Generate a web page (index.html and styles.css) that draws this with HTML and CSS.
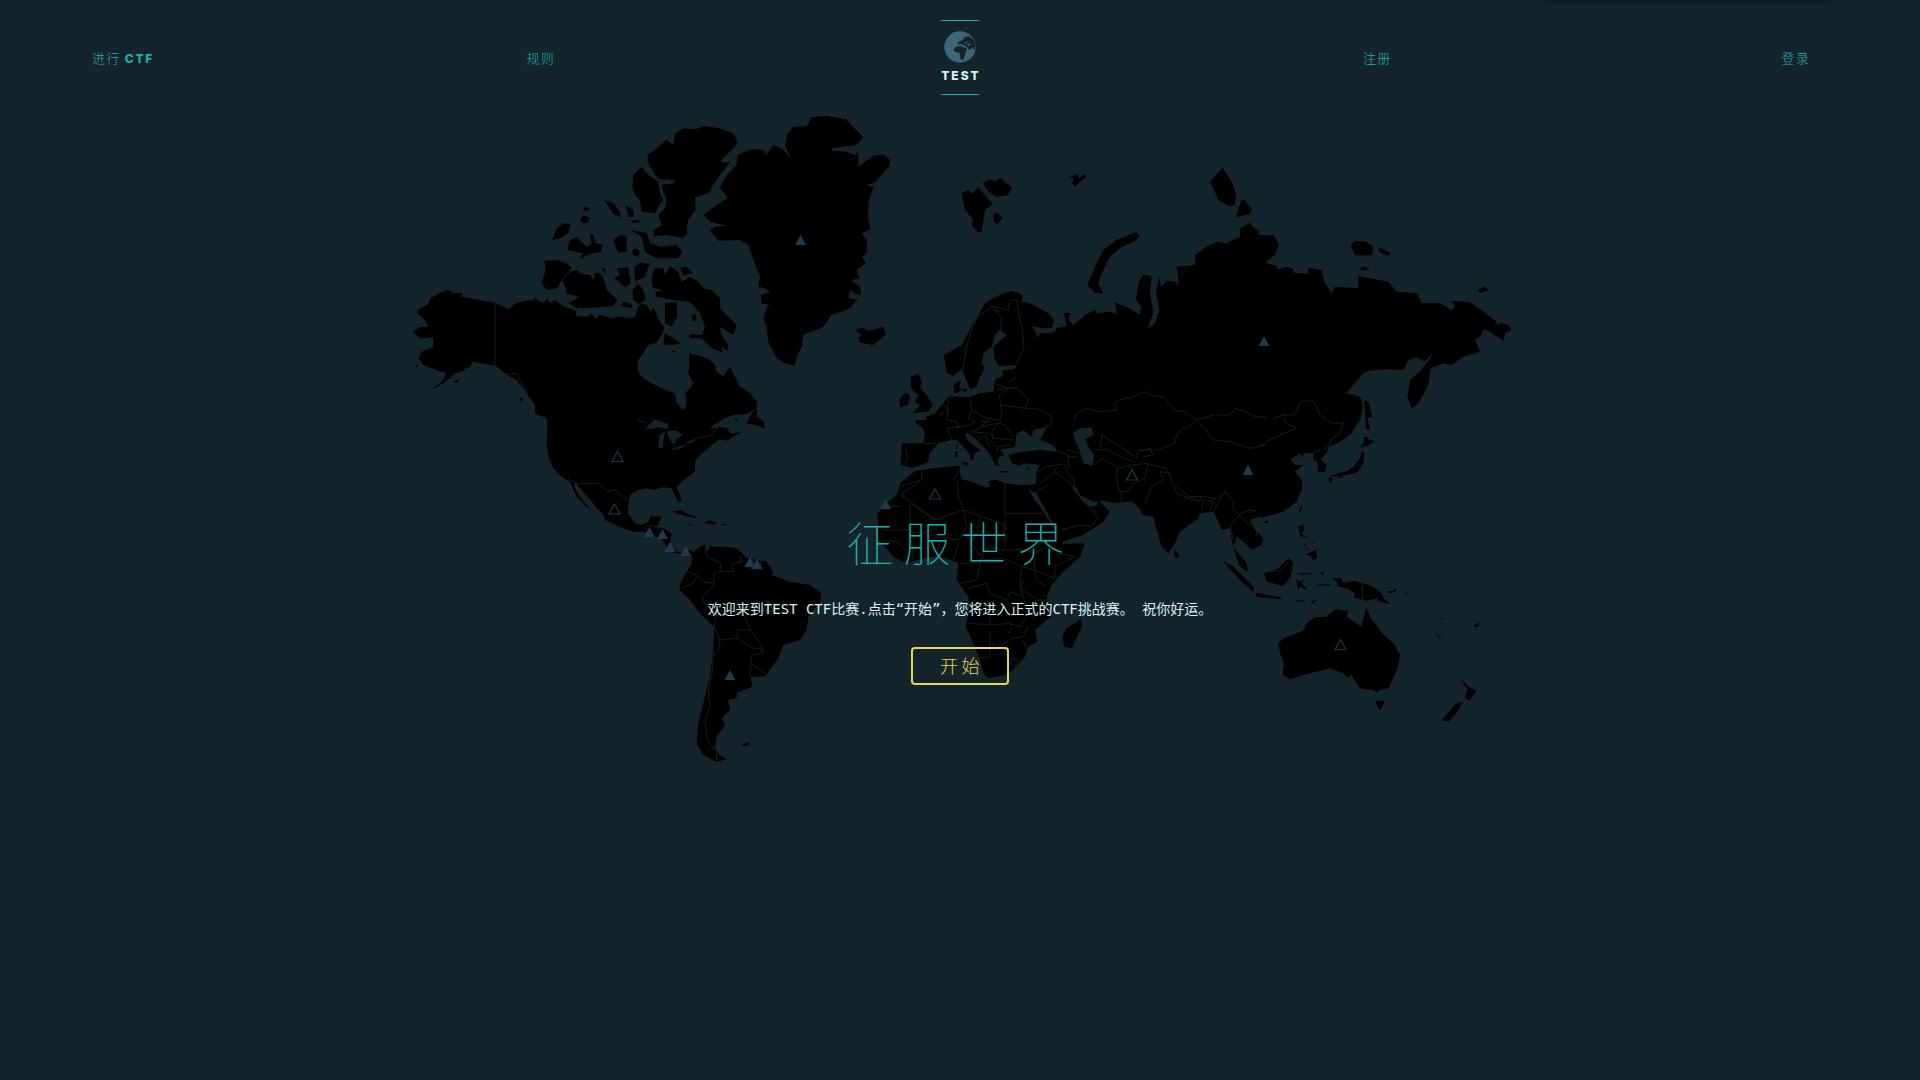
FILE: index.html
```html
<!DOCTYPE html>
<html lang="zh-CN">
<head>
<meta charset="utf-8">
<title>TEST CTF</title>
<link rel="stylesheet" href="styles.css">
</head>
<body>
<div class="page">
<svg class="map" viewBox="0 0 1920 1080" aria-hidden="true">
  <!-- Alaska, Canada and the Arctic islands -->
  <g transform="translate(400 100) scale(.33333)">
    <path class="land" d="M52 630L85 612 90 596 120 578 145 569 160 580 185 578 185 590 240 600 285 608 325 628 345 612 375 602 400 600 408 592 415 602 432 608 440 596 450 608 465 600 490 618 530 632 528 648 560 650 575 642 585 658 600 645 635 655 660 650 690 655 705 650 715 620 725 610 740 615 752 635 760 622 770 645 780 665 792 680 788 700 770 728 745 735 730 760 715 780 712 810 725 830 755 850 790 868 825 880 830 905 845 928 857 925 860 900 855 880 870 865 880 850 865 820 868 790 868 760 900 768 920 775 943 790 950 815 970 828 990 802 1005 830 1020 860 1050 880 1070 905 1070 925 1040 942 1000 945 970 955 940 975 900 1020 442 1020 440 985 455 975 440 955 405 940 405 915 380 880 350 840 320 825 285 797 245 790 215 785 190 812 165 820 130 850 70 883 100 865 130 840 140 818 120 815 95 805 70 795 55 775 65 755 100 740 100 712 60 715 38 697 60 682 85 680 75 660 52 640Z"/>
    <path class="land" d="M742 165L765 150 800 118 820 135 825 100 850 85 885 88 915 78 960 85 1000 100 1013 125 1000 145 965 180 962 186 990 187 960 225 935 262 925 280 885 292 887 330 865 360 860 385 862 400 850 415 800 405 762 408 762 390 785 375 775 345 795 325 800 295 790 280 785 255 820 250 826 240 780 238 765 225 745 190ZM697 260L700 225 725 200 745 225 775 245 780 280 790 300 775 320 768 340 725 335 720 300 705 285ZM613 300L640 310 660 335 662 352 640 342ZM677 317L700 330 700 352 685 350ZM548 328L558 320 570 326 558 335ZM540 358L550 347 568 352 565 366 545 370ZM457 420L470 385 490 370 512 372 505 398 480 415ZM503 450L510 420 530 412 560 440 575 432 570 402 580 405 588 430 607 432 605 455 570 462 540 477 548 460ZM640 420L665 403 680 412 680 455 655 458ZM693 390L740 400 750 430 780 440 830 435 847 455 835 475 770 475 735 455 725 410ZM697 450L708 443 720 455 715 470 698 465ZM695 360H718V368H698ZM433 482L470 480 500 490 515 503 485 540 470 565 440 570 425 548 437 510ZM487 540L510 515 530 510 545 522 570 525 580 540 585 518 600 520 612 540 620 570 652 600 640 618 600 622 530 625 505 608 540 590 497 580 500 570ZM602 505L615 505 616 520ZM643 535L660 525 650 505 685 502 692 550 675 562ZM703 500L720 488 748 492 735 530 705 545ZM697 570L715 552 730 570 737 600 715 612 700 600ZM755 530L765 505 790 505 795 525 810 498 835 515 845 545 870 530 895 545 910 565 935 570 960 595 960 625 980 645 1010 675 1000 705 958 680 965 705 985 735 982 752 962 740 972 760 935 745 905 715 865 715 870 703 905 705 915 680 900 640 870 605 820 600 770 590 765 575 790 573 757 560ZM840 503L860 500 880 520 850 525ZM795 610L830 605 832 650 815 680 795 670ZM875 645L888 642 890 660 876 664ZM795 700L820 715 845 732 790 735ZM672 605L695 612 697 625 662 618ZM1040 970L1055 940 1068 925 1068 950 1090 965 1095 985 1070 975ZM160 845L178 835 172 848ZM188 800L205 783 217 790 205 805ZM357 890L370 897 362 905ZM43 795L55 796 50 801ZM812 756L825 750 822 758ZM845 763L853 766 848 769Z"/>
    <path class="border" d="M285 608V797L320 825 350 820 382 880M455 958H712L760 970"/>
  </g>
  <!-- United States, Central and South America -->
  <g transform="translate(520 400) scale(.33333)">
    <path class="land" d="M82 90V40H640L580 75 570 88 600 80 622 85 630 100 665 97 620 122 600 118 575 135 560 150 535 170 525 185 525 215 490 240 470 262 485 300 475 308 462 280 455 265 430 262 400 270 380 265 350 272 330 285 325 310 325 340 345 370 365 375 385 365 392 348 425 350 415 375 400 380 430 385 455 400 450 430 470 455 500 460 512 448 520 462 505 470 490 462 460 458 440 440 425 415 395 408 370 395 340 395 300 382 255 360 250 345 210 300 185 270 165 248 162 260 180 290 212 328 200 320 170 290 150 245 125 230 100 205 85 170 80 130ZM515 460L540 440 565 430 575 440 610 440 650 445 680 475 740 485 760 515 755 525 810 545 870 555 903 580 900 605 865 650 860 690 840 720 790 735 775 775 735 830 690 830 698 860 650 878 650 895 625 900 630 930 605 955 615 975 590 1010 585 1045 600 1065 620 1078 590 1085 550 1065 530 1030 535 970 550 910 570 830 580 750 582 680 540 640 505 595 478 570 482 545 500 515 515 490ZM455 335L480 330 535 355 510 352ZM552 368L570 360 595 372 575 374ZM505 372L518 373 512 377ZM605 372H618V376H605ZM665 1033L690 1026 686 1036 672 1038ZM503 315L508 318 504 322Z"/>
    <path class="sea" d="M375 85L405 60 445 72 442 88 415 80 395 88ZM440 92L470 92 488 106 468 118 462 136 445 110ZM418 105L436 94 430 120 428 145 416 145ZM454 147L495 134 490 143 460 150ZM492 128L525 118 520 127ZM570 88L600 70 640 52 690 38 680 68 665 92 635 97 620 75 600 72ZM556 432L570 428 567 448 558 452Z"/>
    <path class="land" d="M640 58L655 55 650 62ZM680 70L710 25 710 50 730 65 735 85 710 75Z"/>
    <path class="border" d="M145 238L180 252 235 250 262 275 285 270 325 303M350 60L380 68M495 138L530 115 575 105 600 75M370 392L380 378 400 378M555 440L560 470 602 490 600 515 582 520 582 555 548 590 552 610 580 612M600 515L640 515 635 492 665 485 660 465M500 515L530 525 550 545 580 550M485 565L520 550 530 530M580 612L590 640 582 680 600 720 650 715 655 690 690 690 675 650 620 615M650 715L700 745 720 745 730 760 695 765 690 830M600 720L595 750 580 770 575 830 565 870 570 920 555 960 560 1010 575 1040 585 1050M690 690L725 735 730 760M695 790L735 820M690 510L700 480M720 512L725 480M590 1050V1080M560 1055L580 1045"/>
  </g>
  <!-- Greenland, Iceland, Svalbard and the Nordic countries -->
  <g transform="translate(660 100) scale(.33333)">
    <path class="land" d="M130 345L165 318 203 295 180 262 200 225 230 195 232 165 275 147 310 150 318 165 340 135 370 150 397 178 375 140 380 105 400 80 440 78 455 52 500 48 558 58 590 92 610 112 590 135 515 145 515 152 560 155 585 165 595 155 595 200 640 168 670 163 690 180 688 198 645 248 618 255 640 260 625 310 625 360 632 388 605 400 622 425 620 460 605 470 618 490 590 510 598 535 575 540 600 560 603 583 585 582 570 570 565 595 593 598 570 625 515 645 490 680 430 705 425 740 412 765 403 797 375 790 350 775 325 725 320 680 310 655 320 625 335 600 330 612 305 612 302 585 325 578 335 582 315 565 295 560 300 530 280 480 265 435 240 420 175 422 150 390 165 380 200 378 150 365ZM585 690L605 683 625 692 645 688 670 680 677 705 640 735 600 728 595 715 605 705ZM904 280L925 270 935 282 955 262 975 285 998 312 975 330 965 395 955 398 935 375 940 360 915 330ZM968 250L990 238 1005 245 1020 233 1055 262 1045 285 1010 290 985 275ZM1000 350L1003 338 1015 340 1028 355 1012 372 1002 364Z"/>
    <path class="land" d="M852 765L905 735 940 670 975 610 1000 595 1030 580 1055 572 1088 585 1085 605 1105 608 1130 620 1165 640 1182 660 1175 685 1150 685 1115 678 1130 700 1130 725 1145 732 1145 712 1175 718 1190 683 1220 680 1240 900 1060 900 1020 860 1000 855 1010 835 1030 830 1025 812 1070 805 1068 795 1015 798 1003 775 1000 740 1040 705 1020 690 1005 705 995 740 970 760 965 790 975 805 960 830 950 860 930 868 915 830 905 808 880 828 860 820ZM880 855L902 840 898 860 905 868 892 880 882 878ZM905 868L920 865 915 878ZM752 830L775 822 785 845 780 862 800 885 818 915 805 935 758 940 780 915 765 905 775 885 762 875 752 860ZM718 900L735 878 750 885 745 915 720 922Z"/>
    <path class="border" d="M908 810L920 740 935 690 955 645 985 630 995 618 1025 655 1022 690M995 618L1045 630 1050 600 1070 600 1078 650 1088 700 1092 745 1068 795M1005 628L1020 635"/>
  </g>
  <!-- Russia and its Arctic islands -->
  <g transform="translate(1060 140) scale(.33333)">
    <path class="land" d="M-40 590L-20 575 20 562 12 518 32 520 25 535 38 555 60 540 75 525 105 510 110 520 150 515 170 522 165 487 200 500 240 525 243 500 228 480 235 430 250 403 275 410 270 460 280 520 262 565 285 550 298 510 288 460 298 410 303 440 320 422 345 425 357 438 350 380 405 375 405 345 440 320 470 305 500 310 540 290 540 265 570 248 580 262 592 270 600 285 640 285 657 315 645 345 615 368 650 378 655 388 680 380 700 386 702 398 745 402 743 383 785 390 795 430 815 460 825 440 850 442 895 445 895 408 985 425 1010 455 1070 460 1085 490 1140 490 1175 510 1185 500 1175 482 1230 487 1270 515 1310 545 1310 555 1322 548 1345 555 1355 570 1336 580 1330 602 1285 572 1270 568 1262 590 1245 598 1260 635 1210 650 1175 675 1150 670 1112 685 1105 735 1075 790 1055 807 1042 770 1050 720 1085 690 1110 655 1120 635 1095 665 1070 652 1045 660 1030 690 985 688 930 692 910 700 857 762 885 765 905 780 905 820 880 870 840 900 -40 900ZM82 435L105 380 130 330 170 300 225 277 238 285 230 300 180 325 150 350 125 400 115 430 130 462 105 458ZM450 125L488 83 515 125 528 160 525 195 505 198 475 180 462 150ZM545 177L555 182 575 205 570 222 527 232ZM872 315L885 303 915 304 940 320 935 345 885 347ZM955 325L970 328 992 338 985 347 960 338ZM900 385L915 378 927 390 903 391ZM1255 450L1270 440 1287 450 1260 460ZM27 112L50 103 58 115 70 102 78 112 60 125 45 140 35 130 42 115ZM913 780L925 785 937 830 922 835 930 868 918 868Z"/>
  </g>
  <!-- Europe, Africa, Middle East and India -->
  <g transform="translate(880 340) scale(.33333)">
    <path class="land" d="M105 240L140 240 138 230 165 220 190 190 205 170 235 170 270 172 300 160 340 155 345 130 365 110 410 80 480 -20 1205 -20V515L1150 532 1140 530 1110 540 1125 570 1150 595 1145 615 1115 630 1095 610 1070 590 1060 620 1080 645 1100 670 1103 695 1080 680 1065 640 1055 600 1050 565 1025 570 1010 535 1000 515 960 520 955 535 900 575 885 610 865 640 845 620 830 570 820 530 790 525 775 500 755 485 700 488 670 482 640 485 600 465 588 440 575 440 605 480 625 500 650 498 655 480 690 515 670 545 610 585 545 605 530 570 505 525 480 480 465 450 470 395 480 375 430 370 420 378 395 370 385 345 430 335 480 330 530 335 525 318 480 300 500 262 460 270 455 290 430 270 410 280 405 320 385 325 360 330 375 345 358 350 352 365 360 378 345 375 330 345 320 330 290 300 270 285 262 278 255 282 262 300 302 332 285 338 280 358 270 360 272 345 245 315 225 298 215 300 175 310 150 340 145 365 115 378 95 383 62 375 65 310 130 310 135 280 125 262 108 250ZM240 367L265 368 260 378ZM224 335H233V350L226 352ZM227 318L233 312 231 328ZM362 393L385 394 384 398 363 397ZM435 388L450 380 443 390Z"/>
    <path class="sea" d="M578 280L600 265 635 262 640 285 615 298 625 320 642 345 638 378 610 370 600 335 588 305Z"/>
    <path class="land" d="M105 393L160 385 220 378 240 378 238 395 245 418 275 425 318 442 330 440 325 422 350 420 375 430 430 436 470 432 473 455 460 458 445 445 460 475 480 500 500 530 525 570 545 600 550 612 615 610 600 650 550 695 515 735 500 770 505 800 512 830 465 870 472 905 445 920 435 950 400 990 375 1005 325 1015 310 1000 300 960 275 900 257 860 270 800 265 770 230 720 235 670 200 655 150 650 80 668 45 655 10 615 -10 600 -5 560 -8 520 20 490 50 465 60 430 90 405ZM603 835L605 860 575 925 552 920 548 890 558 865 585 850ZM883 628L898 645 893 655 884 652ZM1028 662L1060 680 1120 740 1120 757 1085 725Z"/>
    <path class="border" d="M580 245L590 220 620 205 660 215 710 210 705 190 715 180 755 172 795 155 820 168 850 170 890 215 910 212 950 240 925 265 910 262 890 285 885 310 830 330 775 330 770 355 720 320 665 285 662 325M950 240L1000 225 1050 225 1065 205 1095 215 1120 228 1180 235 1215 230M955 245L985 280 1000 300 1050 305 1110 325 1180 310 1200 290M640 330L680 328 730 355 765 365M645 375L665 355 710 380 712 430 725 465 722 485M712 385L760 375 800 370 860 385 870 405 880 435 930 470 975 470 1010 478 1035 455 1045 460M805 370L795 415 760 430 740 455 712 455M795 490L815 440 850 420 840 395 870 400M885 445L890 462 960 485 962 470M970 475L965 510M975 480L1000 485 990 515M1000 515L1020 475 1035 455 1060 485 1060 510 1080 525 1050 555 1060 600M1080 525L1100 550 1130 555 1130 590M1080 520L1110 510 1130 515M475 395L500 380 550 372 565 385 565 345 530 330M480 430L525 395 530 380M525 395L590 445M555 385L580 420 585 440M475 450L505 435M545 570L600 555 635 560 655 530 630 500M560 330L600 340M565 350L590 350M780 335L810 325 820 345 790 350M125 395V420L65 462 70 475M120 420L60 440M65 465L165 540 250 510 235 470 232 425M235 395L220 420M250 510L295 525 375 555M375 430V520H485M375 520V620L365 630M165 540L90 490 90 570H10M90 575L130 580 175 560M250 510L260 560 235 600 165 590M300 525L290 580 270 610M375 555L370 590M30 500H60M10 600L50 605 80 630M95 600L100 660M140 600L145 650M180 600L170 650M235 610L220 660M275 610L300 645 330 620 365 630 430 630 465 640 500 615 520 570M240 670H300L310 645M300 670L290 720 240 730M300 660L370 655 425 680 420 740 430 770 390 755 380 780 330 760 320 730 265 745M425 680L465 690 525 715V680L585 650 540 640M465 690L470 720 500 740M430 725L420 745 475 780 510 780M465 690L460 640M265 850L340 855 385 850 420 860 440 830M330 870V950L290 955M330 905L350 925 395 895 430 890 445 860M395 860L385 880M330 800V850M430 770L440 810 465 835M430 900L440 930M390 970L400 955 415 962 405 980ZM75 320L82 350 75 375M130 310L170 312M200 265L215 300M200 265L235 262 230 245 200 240 205 205 180 225M190 190L200 205 210 170M270 172L275 210 265 235 285 245 270 255 225 262M275 210L300 225 320 235 360 240 365 215 358 165M360 195L400 200 435 205 445 180 415 145 385 145 360 165M340 130L385 145M350 150L410 140M410 110L390 125M435 205L470 205 515 230 510 255 495 262M320 240L305 260 275 275M305 260L355 250 375 255 400 290M355 250L335 275 340 300M275 275L325 280 345 295 400 300M315 285L330 320M330 300L350 320 395 315M355 320L350 335M300 245L330 245M290 290L305 300"/>
  </g>
  <!-- East Asia and Oceania -->
  <g transform="translate(1200 360) scale(.33333)">
    <path class="land" d="M200 100L440 100 480 110 488 140 480 180 450 225 420 245 385 262 380 280 362 298 380 315 375 335 355 338 352 305 340 300 342 280 315 280 300 295 305 278 272 298 285 315 310 315 285 335 305 360 308 385 290 425 250 455 205 467 200 460ZM190 487L207 480 200 492ZM298 450L308 432 304 450 300 456ZM480 262L492 245 492 228 510 240 527 243 500 258ZM485 275L493 278 490 310 475 335 440 345 400 350 388 348 430 335 445 332 460 320 480 295ZM385 352L400 355 390 372ZM408 354L430 346 425 354ZM295 500L310 492 312 510 305 522 325 535 300 528ZM312 552L320 555 315 560ZM318 568L324 563 322 572ZM338 545L343 550 335 548ZM315 585L348 570 350 595 338 600 332 587ZM192 640L235 625 265 595 280 607 272 650 250 678 200 665ZM288 658L300 665 318 655 305 668 322 692 300 680 295 692ZM294 640H335V643H294ZM362 635L372 638 366 648ZM165 698L245 712 240 718 170 710ZM265 718L315 722 310 725ZM330 728L350 718 340 730ZM350 675L390 672V676L352 678ZM395 655L425 655 430 668 465 662 520 680 545 700 555 720 572 733 540 725 530 715 500 722 460 712 465 700 440 685 415 680 410 665ZM560 695L580 692 590 683 585 695 570 700ZM605 692L625 700 618 700ZM705 820L725 835 720 836ZM722 775L732 776 726 780ZM820 798L845 785 830 802ZM235 850L250 835 310 812 320 790 345 772 380 770 405 748 445 752 440 770 485 800 498 742 515 780 530 795 545 820 580 850 600 885 595 920 565 985 540 990 530 998 520 990 480 985 460 955 455 945 442 952 430 940 390 925 330 940 310 945 270 958 248 945 252 910 240 880ZM525 1022L538 1024 552 1022 545 1048 535 1048ZM782 957L805 980 830 992 808 1022 795 1015 802 990ZM725 1080L770 1030 790 1025 765 1065 745 1085Z"/>
    <path class="border" d="M220 175L255 165 285 165 300 125 340 122 360 165 395 190 432 188 415 225 395 235 385 262 340 278M255 165L255 185 290 205 240 225 200 245 175 260M195 635L240 632 265 605M487 670V722"/>
  </g>
  <!-- Country markers -->
  <defs><path id="marker" d="M0-5L5.5 5H-5.5Z"/></defs>
  <g class="marker">
    <use href="#marker" x="800.500" y="240"/><use href="#marker" x="1264" y="341"/><use href="#marker" x="1248" y="470"/>
    <use href="#marker" x="730" y="675"/><use href="#marker" x="885.500" y="504"/><use href="#marker" x="649.500" y="532"/>
    <use href="#marker" x="662.500" y="534"/><use href="#marker" x="670" y="547"/><use href="#marker" x="685.500" y="551"/>
    <use href="#marker" x="750" y="562"/><use href="#marker" x="757" y="564"/>
  </g>
  <g class="marker marker-open">
    <use href="#marker" x="617.500" y="456.500"/><use href="#marker" x="614.500" y="509"/><use href="#marker" x="935" y="494"/>
    <use href="#marker" x="1132" y="475"/><use href="#marker" x="1340.500" y="644.500"/><use href="#marker" x="768" y="606"/>
  </g>
</svg>
<div class="tab-shadow"></div>

<header class="nav">
  <nav class="nav-group nav-left"><a>进行 <b>CTF</b></a><a>规则</a></nav>
  <div class="logo">
    <svg class="globe" viewBox="0 0 96 96" aria-hidden="true">
      <circle class="globe-ball" cx="48" cy="48" r="47"/>
      <path class="globe-grid" d="M5 30H91M1 42H95M1 54H95M5 66H91M14 78H82M14 16H82M30 3Q-2 48 30 93M42 1Q22 48 42 95"/>
      <path class="globe-land" d="M28 58L34 47 50 45 57 49 64 50 69 55 65 66 60 80 56 88 50 84 47 66 35 64ZM40 41L44 32 57 27 60 19 76 15 91 29 95 45 90 57 83 50 77 58 68 47 58 42 49 39Z"/>
      <path class="globe-lake" d="M60 35L71 31 66 39ZM70 40L77 37 80 43 72 45Z"/>
    </svg>
    <span>TEST</span>
  </div>
  <nav class="nav-group nav-right"><a>注册</a><a>登录</a></nav>
</header>

<main class="hero">
  <h1>征服世界</h1>
  <p>欢迎来到TEST CTF比赛.点击“开始”，您将进入正式的CTF挑战赛。 祝你好运。</p>
  <a class="start">开始</a>
</main>
</div>
</body>
</html>
```
FILE: styles.css
```css
* { box-sizing: border-box; }
body { margin: 0; background: #14242b; }
.page {
  position: relative;
  height: 1080px;
  overflow: hidden;
  color: #1fb0b4;
  font-family: "Noto Sans CJK SC", sans-serif;
}
.map { position: absolute; inset: 0; width: 1920px; height: 1080px; }
.land { fill: #000; }
.sea { fill: #14242b; }
.border { fill: none; stroke: #182422; stroke-width: 2.6; }
.marker { fill: #1c3a50; }
.marker-open { fill: none; stroke: #1d3546; stroke-width: 1.2; }
.tab-shadow {
  position: absolute;
  top: -2px;
  left: 1549px;
  width: 284px;
  height: 3px;
  background: #0d1b21;
  box-shadow: 0 0 4px 1px #0d1b21;
}

.nav {
  position: relative;
  display: grid;
  grid-template-columns: 1fr 38px 1fr;
  align-items: center;
  height: 116px;
}
.nav-group {
  display: flex;
  justify-content: space-between;
  font-size: 13px;
  font-weight: 300;
  letter-spacing: 1.3px;
  line-height: 20px;
}
.nav-left { padding: 0 386px 0 92px; }
.nav-right { padding: 0 110px 0 384px; }
.nav b { font: 800 12px Inter, sans-serif; letter-spacing: 1.7px; }
.logo {
  display: flex;
  flex-direction: column;
  align-items: center;
  height: 75px;
  margin-top: -1px;
  padding-top: 10px;
  border: solid #22adb2;
  border-width: 1px 0;
  color: #d3f6f9;
}
.logo span { margin: 5px -4px 0 -2px; font: 800 12px/15px Inter, sans-serif; letter-spacing: 2px; }
.globe { width: 32px; height: 32px; flex: none; }
.globe-ball { fill: #3b6575; }
.globe-grid { fill: none; stroke: #4d7d8c; stroke-width: 2; stroke-dasharray: 3 3; }
.globe-land { fill: #14242b; }
.globe-lake { fill: #3b6575; }

.hero {
  position: relative;
  display: flex;
  flex-direction: column;
  align-items: center;
  padding-top: 390px;
}
.hero h1 {
  margin: 0;
  padding-left: 1px;
  font-family: "Noto Sans CJK SC", sans-serif;
  font-size: 47px;
  font-weight: 100;
  line-height: 70px;
  letter-spacing: 10px;
}
.hero p {
  margin: 23px 0 0;
  color: #d5f4f4;
  font: 14px/20px "DejaVu Sans Mono", "Noto Sans CJK SC", monospace;
  white-space: nowrap;
}
.start {
  width: 98px;
  height: 38px;
  margin-top: 28px;
  padding-left: 3px;
  border: 2px solid #e6d65c;
  border-radius: 4px;
  color: #ecd94f;
  font-size: 18px;
  font-weight: 300;
  line-height: 33px;
  letter-spacing: 3.4px;
  text-align: center;
}
```
